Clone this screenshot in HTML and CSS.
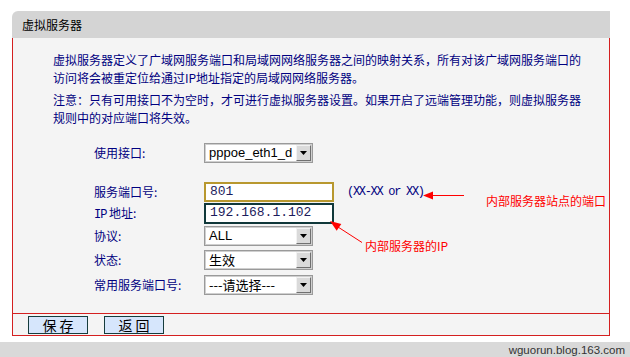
FILE: index.html
```html
<!DOCTYPE html>
<html lang="zh-CN">
<head>
    <meta charset="UTF-8">
    <title>虚拟服务器</title>
    <link rel="stylesheet" href="styles.css">
</head>
<body>

    <!-- Panel -->
    <div class="panel">
        <div class="panel-title">虚拟服务器</div>

        <div class="panel-body">
            <p class="desc">虚拟服务器定义了广域网服务端口和局域网网络服务器之间的映射关系，所有对该广域网服务端口的访问将会被重定位给通过IP地址指定的局域网网络服务器。</p>
            <p class="desc">注意：只有可用接口不为空时，才可进行虚拟服务器设置。如果开启了远端管理功能，则虚拟服务器规则中的对应端口将失效。</p>

            <!-- Form rows -->
            <div class="form">
                <label>使用接口:</label>
                <div class="field">
                    <div class="select">
                        <span class="value latin-val">pppoe_eth1_d</span>
                        <span class="arrow"><svg width="7" height="4" viewBox="0 0 7 4"><path d="M0 0h7L3.5 4z" fill="#000"/></svg></span>
                    </div>
                </div>

                <label>服务端口号:</label>
                <div class="field">
                    <div class="input input-focus">801</div>
                    <span class="hint">(XX-XX or XX)</span>
                </div>

                <label><span class="latin">IP</span>&nbsp;地址:</label>
                <div class="field">
                    <div class="input input-dark">192.168.1.102</div>
                </div>

                <label>协议:</label>
                <div class="field">
                    <div class="select">
                        <span class="value latin-val">ALL</span>
                        <span class="arrow"><svg width="7" height="4" viewBox="0 0 7 4"><path d="M0 0h7L3.5 4z" fill="#000"/></svg></span>
                    </div>
                </div>

                <label>状态:</label>
                <div class="field">
                    <div class="select">
                        <span class="value">生效</span>
                        <span class="arrow"><svg width="7" height="4" viewBox="0 0 7 4"><path d="M0 0h7L3.5 4z" fill="#000"/></svg></span>
                    </div>
                </div>

                <label>常用服务端口号:</label>
                <div class="field">
                    <div class="select">
                        <span class="value">---请选择---</span>
                        <span class="arrow"><svg width="7" height="4" viewBox="0 0 7 4"><path d="M0 0h7L3.5 4z" fill="#000"/></svg></span>
                    </div>
                </div>
            </div>
        </div>

        <!-- Buttons -->
        <div class="panel-foot">
            <button class="btn">保存</button>
            <button class="btn">返回</button>
        </div>
    </div>

    <!-- Bottom bar -->
    <div class="site-bar">wguorun.blog.163.com</div>

    <!-- Red annotations drawn over the screenshot -->
    <svg class="notes" width="630" height="357" viewBox="0 0 630 357">
        <line x1="432" y1="195.5" x2="464" y2="195.5" stroke="#ff0000" stroke-width="1"/>
        <polygon points="423,195.5 433,191.5 433,199.5" fill="#ff0000"/>
        <text x="486" y="206">内部服务器站点的端口</text>

        <line x1="338" y1="227" x2="362" y2="242.5" stroke="#ff0000" stroke-width="1"/>
        <polygon points="330,221 336.7,230.7 341.3,224.1" fill="#ff0000"/>
        <text x="365" y="251">内部服务器的IP</text>
    </svg>

</body>
</html>
```

FILE: styles.css
```css
/* General page */
html, body {
    margin: 0;
    padding: 0;
}

body {
    position: relative;
    width: 630px;
    height: 357px;
    overflow: hidden;
    background-color: #fff;
    font-family: "Noto Sans CJK SC", sans-serif;
    font-size: 12px;
    padding-top: 11px;
    box-sizing: border-box;
}

/* Panel frame */
.panel {
    margin-left: 12px;
    width: 598px;
}

.panel-title {
    height: 27px;
    line-height: 27px;
    padding-left: 10px;
    background-color: #d4d4d4;
    border-top-left-radius: 6px;
    color: #000;
}

.panel-body {
    height: 262px;
    padding: 13px 24px 0 40px;
    background-color: #f4f4f4;
    border-left: 1px solid #d42020;
    border-right: 1px solid #d42020;
    border-bottom: 1px solid #d42020;
}

/* Description text */
.desc {
    margin: 0 0 4px 0;
    width: 532px;
    line-height: 18px;
    color: #000080;
}

/* Form grid */
.form {
    display: grid;
    grid-template-columns: 110px auto;
    grid-template-rows: 39px 21px 23px 24px 25px 20px;
    margin-top: 16px;
    padding-left: 41px;
}

.form label {
    height: 20px;
    line-height: 20px;
    color: #000080;
}

.form .latin {
    font-family: "Liberation Mono", monospace;
    font-size: 12px;
    letter-spacing: -1px;
}

.field {
    display: flex;
    align-items: center;
    height: 20px;
}

/* Fake select boxes */
.select {
    display: flex;
    align-items: center;
    justify-content: space-between;
    width: 109px;
    height: 20px;
    box-sizing: border-box;
    background-color: #fff;
    border: 1px solid #9a9a9a;
    box-shadow: inset 0 0 0 1px #cfcfcf;
    padding: 0 1px 0 4px;
}

.select .value {
    font-size: 13px;
    color: #000;
    line-height: 18px;
    white-space: nowrap;
}

.select .latin-val {
    font-family: "Liberation Sans", sans-serif;
}

.select .arrow {
    display: flex;
    flex-shrink: 0;
    align-items: center;
    justify-content: center;
    width: 15px;
    height: 16px;
    box-sizing: border-box;
    background-color: #dadada;
    border: 1px solid;
    border-color: #f2f2f2 #707070 #707070 #f2f2f2;
}

/* Text inputs */
.input {
    width: 130px;
    height: 20px;
    box-sizing: border-box;
    padding-left: 4px;
    background-color: #fff;
    font-family: "Liberation Mono", monospace;
    font-size: 13px;
    line-height: 16px;
    color: #1c1c5c;
}

.input-focus {
    border: 2px solid #b8982f;
}

.input-dark {
    height: 21px;
    border: 2px solid #10383a;
}

.hint {
    margin-left: 13px;
    font-family: "Liberation Mono", monospace;
    font-size: 12px;
    letter-spacing: -1.3px;
    color: #000080;
}

/* Button row */
.panel-foot {
    display: flex;
    gap: 16px;
    height: 22px;
    padding: 2px 0 0 15px;
    box-sizing: border-box;
    background-color: #f4f4f4;
    border-left: 1px solid #d42020;
    border-right: 1px solid #d42020;
    border-bottom: 1px solid #d42020;
}

.btn {
    width: 60px;
    height: 18px;
    padding: 0 0 0 3px;
    margin: 0;
    background-color: #d6e6fc;
    border: 1px solid #163c3c;
    font-family: "Noto Sans CJK SC", sans-serif;
    font-size: 14px;
    line-height: 14px;
    letter-spacing: 3px;
    color: #000;
}

/* Grey strip at the bottom */
.site-bar {
    margin-top: 6px;
    height: 20px;
    line-height: 16px;
    padding-right: 5px;
    text-align: right;
    background-color: #d9d9d9;
    font-family: "Liberation Sans", sans-serif;
    font-size: 11.5px;
    color: #333;
}

/* Annotation overlay */
.notes {
    position: absolute;
    top: 0;
    left: 0;
    pointer-events: none;
}

.notes text {
    font-family: "Noto Sans CJK SC", sans-serif;
    font-size: 12px;
    fill: #ff0000;
}
```
